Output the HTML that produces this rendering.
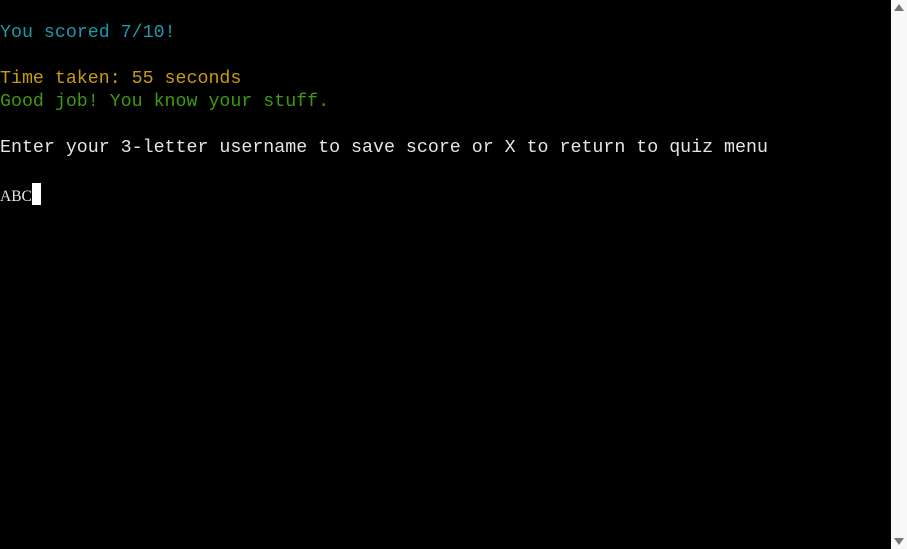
<!DOCTYPE html>
<html><head><meta charset="utf-8"><style>
html,body{margin:0;padding:0;background:#000;width:907px;height:549px;overflow:hidden}
.t{position:absolute;left:0;top:-1px;font-family:"Liberation Mono",monospace;font-size:18.3px;line-height:23px;white-space:pre;color:#e5e5e5}
.c{color:#1b9aab}.y{color:#c99a10}.g{color:#3d9a10}
.abc{font-family:"Liberation Serif",serif;font-size:15.5px}
.cur{display:inline-block;width:9px;height:22px;background:#fff;vertical-align:-4px}
.sb{position:absolute;left:891px;top:0;width:16px;height:549px;background:#f8f8f8}
.up{position:absolute;left:3px;top:4px;width:0;height:0;border-left:5px solid transparent;border-right:5px solid transparent;border-bottom:7px solid #777}
.dn{position:absolute;left:3px;bottom:4px;width:0;height:0;border-left:5px solid transparent;border-right:5px solid transparent;border-top:7px solid #777}
</style></head><body>
<div class="t">
<span class="c">You scored 7/10!</span>

<span class="y">Time taken: 55 seconds</span>
<span class="g">Good job! You know your stuff.</span>

Enter your 3-letter username to save score or X to return to quiz menu

<span class="abc">ABC</span><span class="cur"></span></div>
<div class="sb"><div class="up"></div><div class="dn"></div></div>
</body></html>
